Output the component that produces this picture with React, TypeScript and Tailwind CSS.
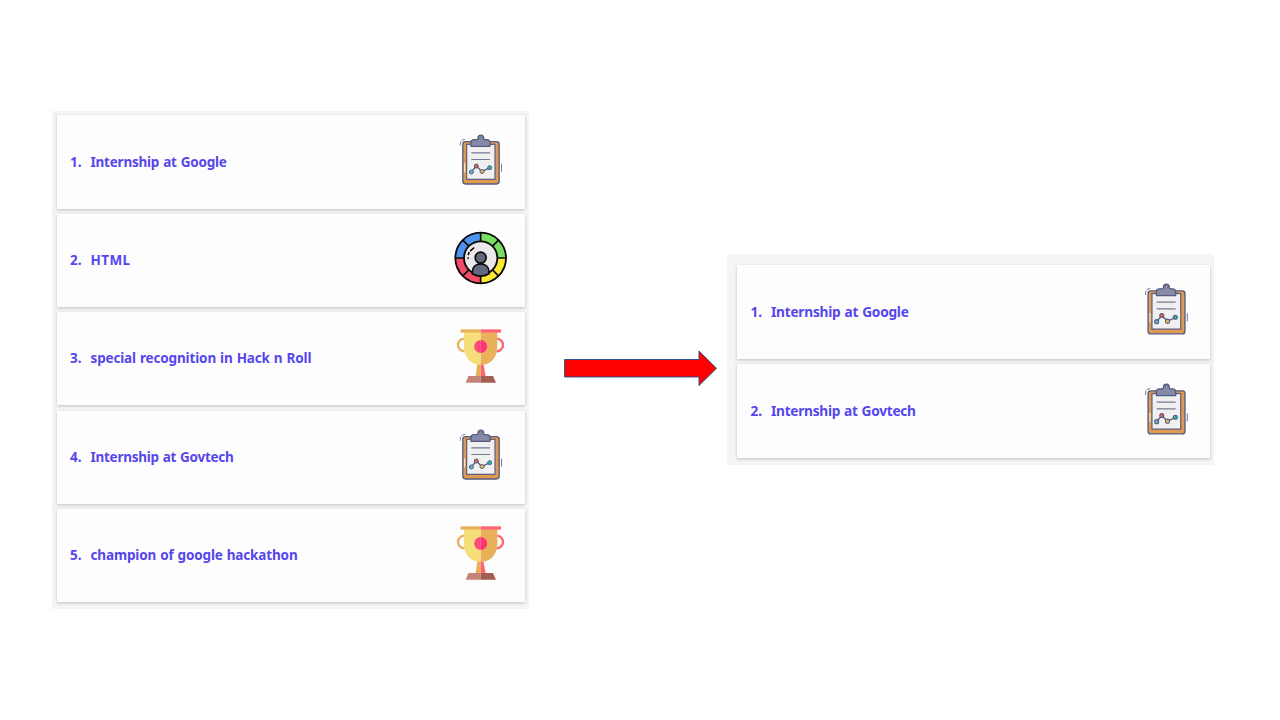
import React from "react";

type IconKind = "clipboard" | "wheel" | "trophy";

interface Item {
  label: string;
  icon: IconKind;
  spacing: string;
}

function Clipboard({ className }: { className: string }) {
  return (
    <svg className={className} viewBox="-6 15 192 192" fill="none" aria-hidden="true">
      <path d="M31 62v-4q0-14 14-15" stroke="#7b80a0" strokeWidth="3" strokeDasharray="12 3" />
      <path d="M154.500 116v24" stroke="#777c9a" strokeWidth="3" />
      <rect x="38.500" y="50" width="109" height="127" rx="8" fill="#df9a52" stroke="#565b80" strokeWidth="4" />
      <path d="M44 116v25" stroke="#fff0da" strokeWidth="3" strokeLinecap="round" />
      <rect x="50" y="58" width="85" height="105" fill="#f0f0f1" stroke="#565b80" strokeWidth="3.500" />
      <path d="M63 64V53q0-9 9-9h9q3 0 3-5a8.500 8.500 0 0 1 17 0q0 5 3 5h7q9 0 9 9v11z" fill="#858aa8" stroke="#565b80" strokeWidth="4" strokeLinejoin="round" />
      <circle cx="92.500" cy="39" r="3" fill="#e3e4ea" stroke="#565b80" strokeWidth="2.500" />
      <path d="M64 83.500h56M64 103.500h56" stroke="#747997" strokeWidth="3.500" />
      <path d="M64 141l15-18 17 17 23-12" stroke="#565b80" strokeWidth="4" />
      <circle cx="64" cy="141" r="6" fill="#67b3c6" stroke="#565b80" strokeWidth="3" />
      <circle cx="79" cy="123" r="6" fill="#ed5a50" stroke="#565b80" strokeWidth="3" />
      <circle cx="96" cy="139.500" r="6" fill="#f3bf45" stroke="#565b80" strokeWidth="3" />
      <circle cx="119" cy="128" r="6" fill="#20b9a6" stroke="#565b80" strokeWidth="3" />
    </svg>
  );
}

function Wheel({ className }: { className: string }) {
  return (
    <svg className={className} viewBox="0 5 192 192" fill="none" aria-hidden="true">
      <path d="M98 95V18a77 77 0 0 0-77 77z" fill="#4d93ee" />
      <path d="M98 95V18a77 77 0 0 1 77 77z" fill="#79df62" />
      <path d="M98 95h77a77 77 0 0 1-77 77z" fill="#fbe936" />
      <path d="M98 95v77a77 77 0 0 1-77-77z" fill="#f64b68" />
      <circle cx="98" cy="95" r="76" stroke="#080808" strokeWidth="5.500" />
      <path d="M98 18v154M21 95h154M43.600 40.600l108.800 108.800M152.400 40.600L43.600 149.400" stroke="#080808" strokeWidth="5" />
      <circle cx="98" cy="95" r="50" fill="#ece7ea" stroke="#080808" strokeWidth="5.500" />
      <path d="M73 142v-5c0-15 10-24 25-24s25 9 25 24v5q-25 15-50 0z" fill="#62677e" stroke="#080808" strokeWidth="5" />
      <circle cx="98" cy="94" r="16.500" fill="#62677e" stroke="#080808" strokeWidth="5" />
      <path d="M61 84l2-5M68 73l9-8" stroke="#080808" strokeWidth="5" strokeLinecap="round" />
      <circle cx="60.500" cy="95.500" r="2.500" fill="#080808" />
    </svg>
  );
}

function Trophy({ className }: { className: string }) {
  return (
    <svg className={className} viewBox="0 15 192 192" fill="none" aria-hidden="true">
      <path d="M48 50a18 18 0 0 0 2 38" stroke="#eab15b" strokeWidth="7" />
      <path d="M147 50a18 18 0 0 1-2 38" stroke="#ff6570" strokeWidth="7" />
      <path d="M88 125h10v38H83z" fill="#e9b05b" />
      <path d="M98 125h8l7 38H98z" fill="#ff6570" />
      <path d="M48 31h50v98C67 129 48 105 48 76z" fill="#f6de7b" />
      <path d="M98 31h50v45c0 29-19 53-50 53z" fill="#eab15b" />
      <path d="M38 22h60v10H38z" fill="#eab15b" />
      <path d="M98 22h61v10H98z" fill="#ff6570" />
      <path d="M98 54a19.500 19.500 0 0 0 0 39z" fill="#ff4b79" />
      <path d="M98 54a19.500 19.500 0 0 1 0 39z" fill="#ff337a" />
      <path d="M61 162h37v20H53z" fill="#c48477" />
      <path d="M98 162h37l9 20H98z" fill="#a45d50" />
    </svg>
  );
}

function CardIcon({ kind, className }: { kind: IconKind; className: string }) {
  if (kind === "wheel") return <Wheel className={className} />;
  if (kind === "trophy") return <Trophy className={className} />;
  return <Clipboard className={className} />;
}

const allItems: Item[] = [
  { label: "Internship at Google", icon: "clipboard", spacing: "tracking-[-0.22px]" },
  { label: "HTML", icon: "wheel", spacing: "tracking-[0.4px]" },
  { label: "special recognition in Hack n Roll", icon: "trophy", spacing: "tracking-[-0.15px]" },
  { label: "Internship at Govtech", icon: "clipboard", spacing: "tracking-[-0.26px]" },
  { label: "champion of google hackathon", icon: "trophy", spacing: "tracking-[-0.15px]" },
];

const internships: Item[] = [
  { label: "Internship at Google", icon: "clipboard", spacing: "tracking-[-0.24px]" },
  { label: "Internship at Govtech", icon: "clipboard", spacing: "tracking-[-0.28px]" },
];

export default function App() {
  return (
    <main className="flex h-[720px] w-[1280px] items-start overflow-hidden bg-white pl-[52px] font-['Noto_Sans',sans-serif] font-bold text-[#5547ec] [word-spacing:0.7px]">
      <section className="mt-[111px] flex h-[498px] w-[477px] shrink-0 flex-col gap-[5.100px] bg-[#f4f5f7] pt-[4.400px] pr-[4px] pl-[5px]">
        {allItems.map((item, i) => (
          <article key={item.label} className="flex h-[93.300px] shrink-0 items-center bg-[#fdfdfd] pr-[13px] pl-[13px] shadow-[0_1px_3px_rgba(0,0,0,0.22)]">
            <span className="w-[20.500px] pb-[0.800px] text-[13.500px] leading-5">{i + 1}.</span>
            <span className={`grow whitespace-nowrap pb-[0.800px] text-[13.500px] leading-5 ${item.spacing}`}>{item.label}</span>
            <CardIcon kind={item.icon} className="size-16 shrink-0" />
          </article>
        ))}
      </section>
      <svg className="mt-[348px] ml-[33px] h-10 w-[158px] shrink-0" viewBox="562 348 158 40" aria-hidden="true">
        <path d="M564.500 359.500H699V351l17.500 17.300L699 385.500V377H564.500z" fill="#ff0000" stroke="#2f528f" strokeWidth="1" />
      </svg>
      <section className="mt-[254px] ml-[7px] flex h-[211.400px] w-[487px] shrink-0 flex-col gap-[5.500px] bg-[#f4f5f7] pt-[10.900px] pr-[4px] pl-[10px]">
        {internships.map((item, i) => (
          <article key={item.label} className="flex h-[94px] shrink-0 items-center bg-[#fdfdfd] pr-[12.500px] pl-[13.500px] shadow-[0_1px_3px_rgba(0,0,0,0.22)]">
            <span className="w-[20.500px] text-[13.700px] leading-5">{i + 1}.</span>
            <span className={`grow whitespace-nowrap text-[13.700px] leading-5 ${item.spacing}`}>{item.label}</span>
            <CardIcon kind={item.icon} className="size-[65px] shrink-0" />
          </article>
        ))}
      </section>
    </main>
  );
}
